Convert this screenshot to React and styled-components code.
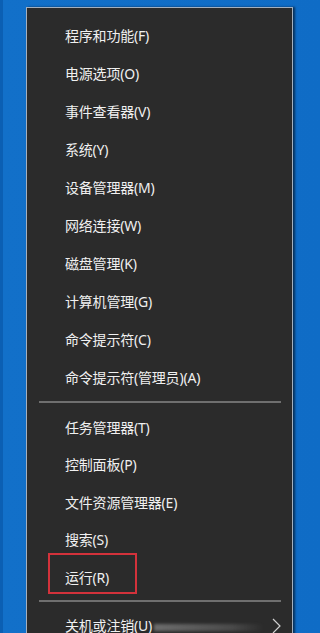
import React from "react";
import styled, { createGlobalStyle } from "styled-components";

const Global = createGlobalStyle`
  html, body { margin: 0; padding: 0; }
  body {
    width: 309px;
    height: 633px;
    overflow: hidden;
    background: linear-gradient(to right, #0b5fb3 0, #0b5fb3 3px, #1270c9 3px, #0f6cc6 100%);
    font-family: "Segoe UI", "Noto Sans", "Noto Sans CJK SC", sans-serif;
  }
`;

const Page = styled.div`
  display: flex;
  padding: 7px 0 0 26px;
`;

const Menu = styled.div`
  width: 265px;
  height: 660px;
  background: #2b2b2b;
  border: 1px solid #a4b0bf;
  border-bottom: none;
  box-shadow: 2px 0 2px rgba(0, 0, 0, 0.55);
  padding-top: 8px;
  display: flex;
  flex-direction: column;
`;

const Item = styled.div`
  position: relative;
  flex: 0 0 auto;
  height: ${(p) => p.$h || 38}px;
  display: flex;
  align-items: center;
  padding-left: 38px;
  padding-right: 11px;
  color: #f0f0f0;
  font-size: 14px;
  letter-spacing: -0.2px;
  white-space: nowrap;
`;

const Label = styled.span`
  flex: 0 0 auto;
`;

const Separator = styled.div`
  flex: 0 0 auto;
  height: ${(p) => p.$h || 12}px;
  display: flex;
  align-items: center;
  padding: 0 11px 0 12px;
  &::after {
    content: "";
    flex: 1;
    height: 2px;
    background: #6f6f6f;
  }
`;

const Highlight = styled.span`
  position: absolute;
  left: 21px;
  top: -5px;
  width: 85px;
  height: 37px;
  border: 2px solid #d3323b;
  pointer-events: none;
`;

const Smudge = styled.span`
  flex: 1;
  height: 7px;
  margin: 6px 8px 0 2px;
  background: linear-gradient(to right, rgba(190,190,190,0.45), rgba(170,170,170,0.25) 70%, rgba(150,150,150,0));
  filter: blur(1.5px);
`;

const Chevron = styled.svg`
  flex: 0 0 auto;
  width: 9px;
  height: 16px;
  margin-top: 2px;
`;

const top = [
  "程序和功能(F)",
  "电源选项(O)",
  "事件查看器(V)",
  "系统(Y)",
  "设备管理器(M)",
  "网络连接(W)",
  "磁盘管理(K)",
  "计算机管理(G)",
  "命令提示符(C)",
  "命令提示符(管理员)(A)",
];

const middle = [
  "任务管理器(T)",
  "控制面板(P)",
  "文件资源管理器(E)",
  "搜索(S)",
];

export default function App() {
  return (
    <>
      <Global />
      <Page>
        <Menu>
          {top.map((t) => (
            <Item key={t}>
              <Label>{t}</Label>
            </Item>
          ))}
          <Separator />
          {middle.map((t) => (
            <Item key={t} $h={37.5}>
              <Label>{t}</Label>
            </Item>
          ))}
          <Item $h={37.5}>
            <Label>运行(R)</Label>
            <Highlight />
          </Item>
          <Separator $h={10} />
          <Item>
            <Label>关机或注销(U)</Label>
            <Smudge />
            <Chevron viewBox="0 0 9 16">
              <path d="M1 1 L8 8 L1 15" fill="none" stroke="#cfcfcf" strokeWidth="1.2" />
            </Chevron>
          </Item>
        </Menu>
      </Page>
    </>
  );
}
